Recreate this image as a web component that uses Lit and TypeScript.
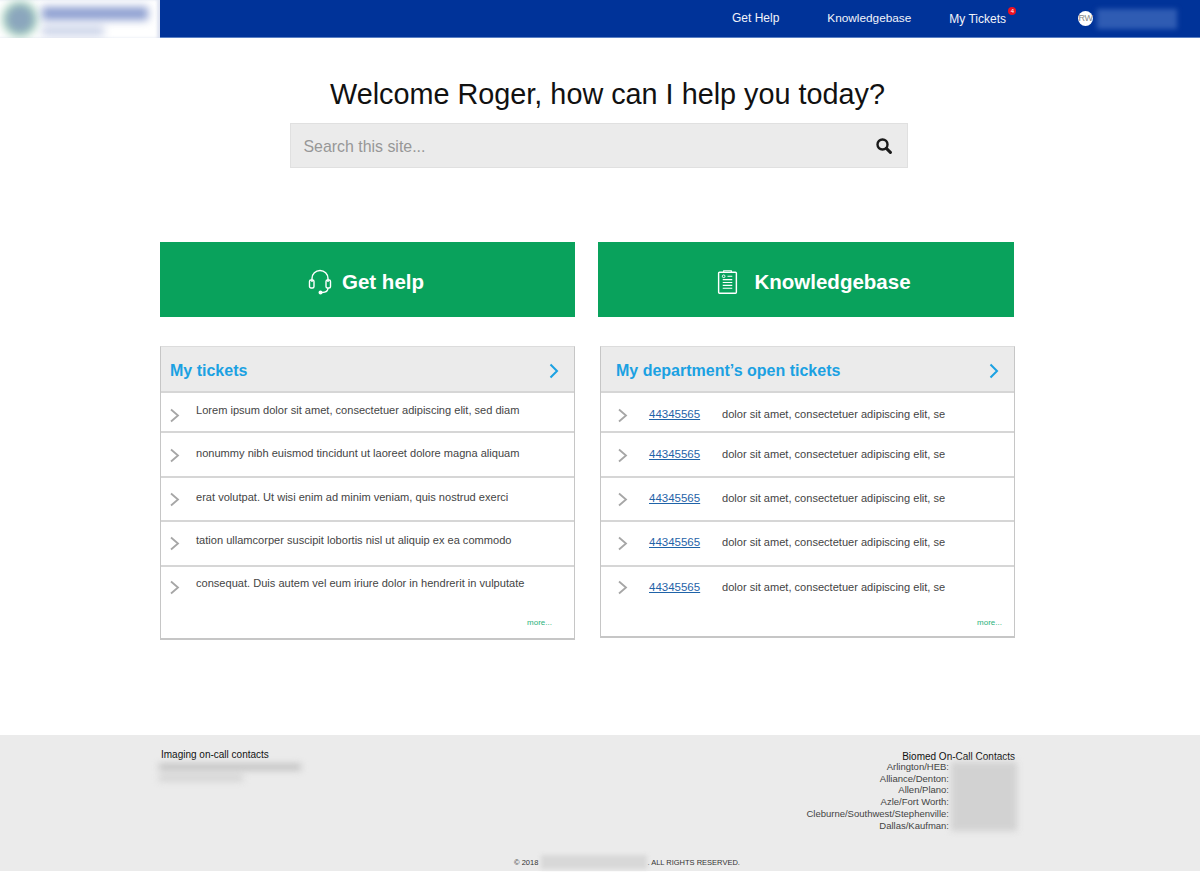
import { LitElement, html, css, svg } from "lit";
import { customElement } from "lit/decorators.js";

const left = [
  { t: "Lorem ipsum dolor sit amet, consectetuer adipiscing elit, sed diam", m: 9 },
  { t: "nonummy nibh euismod tincidunt ut laoreet dolore magna aliquam", m: 12 },
  { t: "erat volutpat. Ut wisi enim ad minim veniam, quis nostrud exerci", m: 11 },
  { t: "tation ullamcorper suscipit lobortis nisl ut aliquip ex ea commodo", m: 10 },
  { t: "consequat. Duis autem vel eum iriure dolor in hendrerit in vulputate", m: 8 },
];
const rowH = [40, 45, 44, 45, 44];
const chevTop = [14.5, 14.5, 13.5, 13.5, 12.5];
const rightM = [13, 13, 12, 12, 12];
const places = ["Arlington/HEB:", "Alliance/Denton:", "Allen/Plano:", "Azle/Fort Worth:", "Cleburne/Southwest/Stephenville:", "Dallas/Kaufman:"];

const chevron = svg`<path d="M1 1.5l7 6-7 6" fill="none" stroke="#a6a6a6" stroke-width="1.8"/>`;
const blueChevron = svg`<path d="M1.5 1.5l6.5 6.5-6.5 6.5" fill="none" stroke="#1ba1e2" stroke-width="2"/>`;

@customElement("app-root")
export class AppRoot extends LitElement {
  static styles = css`
    :host { display: block; width: 1200px; height: 872px; overflow: hidden; background: #fff; font-family: "Liberation Sans", Arial, sans-serif; color: #333; }
    * { box-sizing: border-box; }
    .top { display: flex; height: 38px; }
    .logo { width: 160px; height: 38px; display: flex; gap: 8px; padding: 5px 0 0 6px; overflow: hidden; background: #fff; box-shadow: inset -3px 0 3px #dfe4f1; }
    .logo-mark { width: 28px; height: 28px; border-radius: 50%; background: #8ba6bd; box-shadow: 0 0 0 4px #a9d9bd; filter: blur(4px); flex: none; }
    .logo-text { display: flex; flex-direction: column; gap: 7px; padding-top: 2px; filter: blur(4px); }
    .logo-a { width: 106px; height: 13px; background: #8c9ed0; }
    .logo-b { width: 62px; height: 8px; background: #c2cce5; }
    .bar { flex: 1; background: #003399; border-bottom: 1px solid #5a80c4; color: #f2f4fa; font-size: 12px; display: flex; align-items: center; position: relative; padding-left: 572px; }
    .nav { margin-top: -1px; white-space: nowrap; }
    .nav.help { margin-right: 48px; }
    .nav.know { margin-right: 38px; font-size: 11.8px; }
    .nav.tickets { margin-right: 72px; position: relative; margin-top: 1px; }
    .badge { position: absolute; left: 59px; top: -5px; width: 8px; height: 8px; border-radius: 50%; background: #ee1122; color: #fff; font-size: 6px; line-height: 8px; text-align: center; }
    .avatar { width: 15px; height: 15px; border-radius: 50%; background: #fff; color: #888; font-size: 9px; line-height: 15px; text-align: center; flex: none; letter-spacing: -0.5px; }
    .who { width: 80px; height: 20px; margin-left: 4px; background: #2f5cb3; filter: blur(2.5px); flex: none; }
    .hero { display: flex; flex-direction: column; align-items: center; padding: 37px 1px 0 16px; height: 204px; }
    h1 { margin: 0; font-size: 28.8px; line-height: 38px; font-weight: 400; color: #111; white-space: nowrap; }
    .search { margin: 10px 0 0 -18px; width: 618px; height: 45px; background: #ebebeb; border: 1px solid #e0e0e0; display: flex; align-items: center; justify-content: space-between; padding: 0 15px 0 13px; font-size: 15.9px; color: #979797; }
    .search span { margin-top: 2px; }
    .search svg { display: block; }
    .main { width: 855px; margin-left: 160px; }
    .cta { display: grid; grid-template-columns: 415px 416px; gap: 23px; }
    .btn { height: 75px; background: #09a25c; color: #fff; font-size: 20.5px; font-weight: 700; display: flex; align-items: center; justify-content: center; padding-top: 4px; }
    .btn.help { gap: 10px; padding-right: 3px; }
    .btn.kb { gap: 16px; padding-left: 16px; }
    .panels { display: grid; grid-template-columns: 415px 415px; gap: 25px; margin-top: 29px; align-items: start; }
    .panel { border: 1px solid #c6c6c6; border-top-color: #dcdcdc; border-bottom-width: 2px; display: flex; flex-direction: column; }
    .panel.l { height: 294px; }
    .panel.r { height: 292px; }
    .head { height: 44px; flex: none; background: #ebebeb; color: #1ba1e2; font-size: 16px; font-weight: 700; display: flex; align-items: center; justify-content: space-between; padding: 3px 15px 0 9px; }
    .r .head { padding-left: 15px; }
    .row { flex: none; border-top: 2px solid #d6d6d6; display: flex; font-size: 11.07px; line-height: 16px; color: #444; white-space: nowrap; position: relative; align-items: flex-start; }
    .row svg { position: absolute; left: 9px; }
    .r .row svg { left: 17px; }
    .l .row .t { margin-left: 35px; }
    .r .row .id { margin-left: 48px; width: 73px; color: #1f63a8; text-decoration: underline; font-size: 11.5px; }
    .foot-more { display: flex; justify-content: flex-end; font-size: 8px; color: #2ab27b; padding: 9px 22px 0 0; }
    .r .foot-more { padding-right: 12px; }
    footer { margin-top: 95px; height: 136px; background: #ebebeb; position: relative; font-size: 9.5px; color: #222; display: flex; flex-direction: column; }
    .fcols { display: flex; justify-content: space-between; padding: 14px 185px 0 161px; height: 120px; }
    .fl b, .fr b { font-weight: 400; font-size: 10px; color: #111; display: block; line-height: 12px; }
    .fr b { margin-top: 2px; margin-bottom: -2px; }
    .fl-blur { width: 142px; margin: 3px 0 0 -2px; display: flex; flex-direction: column; gap: 5px; filter: blur(3.5px); }
    .fl-blur i { display: block; height: 6px; background: #bdbdbd; }
    .fl-blur i:last-child { width: 84px; background: #d0d0d0; }
    .fr { text-align: right; position: relative; }
    .fr .places { line-height: 11.7px; margin-right: 66px; color: #444; }
    .fr-blur { position: absolute; left: 100%; margin-left: -64px; top: 13px; width: 66px; height: 69px; background: #d2d2d2; filter: blur(3px); }
    .copy { font-size: 7.5px; color: #333; display: flex; align-items: center; justify-content: center; padding-left: 54px; }
    .copy-blur { width: 106px; height: 14px; margin: 0 0 0 3px; background: #d8d8d8; filter: blur(2px); }
  `;

  render() {
    return html`
      <div class="top">
        <div class="logo"><div class="logo-mark"></div><div class="logo-text"><div class="logo-a"></div><div class="logo-b"></div></div></div>
        <div class="bar">
          <span class="nav help">Get Help</span>
          <span class="nav know">Knowledgebase</span>
          <span class="nav tickets">My Tickets<span class="badge">4</span></span>
          <span class="avatar">RW</span><span class="who"></span>
        </div>
      </div>
      <div class="hero">
        <h1>Welcome Roger, how can I help you today?</h1>
        <div class="search">
          <span>Search this site...</span>
          <svg width="16" height="16" viewBox="0 0 16 16"><circle cx="6.5" cy="6.5" r="5" fill="none" stroke="#1a1a1a" stroke-width="2.4"/><path d="M10.4 10.4l4 4" stroke="#1a1a1a" stroke-width="3" stroke-linecap="round"/></svg>
        </div>
      </div>
      <div class="main">
        <div class="cta">
          <div class="btn help">
            <svg width="24" height="26" viewBox="0 0 24 26" fill="none" stroke="#fff" stroke-width="1.4">
              <path d="M4 13V9.5a8 8 0 0 1 16 0V13"/>
              <rect x="1.5" y="11" width="4.5" height="8" rx="1.5"/>
              <rect x="18" y="11" width="4.5" height="8" rx="1.5"/>
              <path d="M20 19c0 3-2.5 4.5-6 4.5"/>
              <circle cx="12.5" cy="23.5" r="1.3" fill="#fff"/>
            </svg>
            <span>Get help</span>
          </div>
          <div class="btn kb">
            <svg width="21" height="26" viewBox="0 0 22 26" fill="none" stroke="#fff" stroke-width="1.5">
              <rect x="1.7" y="2.7" width="18.6" height="22" rx="1"/>
              <path d="M7 3.2V1.2h8v2M6 10.5h10M6 13.5h10M6 16.5h10M6 19.5h10M11 7h5" stroke-width="1.2"/>
              <circle cx="7" cy="7" r="1.4" stroke-width="1"/>
            </svg>
            <span>Knowledgebase</span>
          </div>
        </div>
        <div class="panels">
          <div class="panel l">
            <div class="head"><span>My tickets</span><svg width="10" height="16" viewBox="0 0 10 16">${blueChevron}</svg></div>
            ${left.map((r, i) => html`<div class="row" style="height:${rowH[i]}px"><svg style="top:${chevTop[i]}px" width="10" height="15" viewBox="0 0 10 15">${chevron}</svg><span class="t" style="margin-top:${r.m}px">${r.t}</span></div>`)}
            <div class="foot-more">more...</div>
          </div>
          <div class="panel r">
            <div class="head"><span>My department’s open tickets</span><svg width="10" height="16" viewBox="0 0 10 16">${blueChevron}</svg></div>
            ${rowH.map((h, i) => html`<div class="row" style="height:${h}px"><svg style="top:${chevTop[i]}px" width="10" height="15" viewBox="0 0 10 15">${chevron}</svg><span class="id" style="margin-top:${rightM[i]}px">44345565</span><span style="margin-top:${rightM[i]}px">dolor sit amet, consectetuer adipiscing elit, se</span></div>`)}
            <div class="foot-more">more...</div>
          </div>
        </div>
      </div>
      <footer>
        <div class="fcols">
          <div class="fl"><b>Imaging on-call contacts</b><div class="fl-blur"><i></i><i></i></div></div>
          <div class="fr"><b>Biomed On-Call Contacts</b>
            <div class="places">${places.map((p) => html`<div>${p}</div>`)}</div>
            <div class="fr-blur"></div>
          </div>
        </div>
        <div class="copy"><span>© 2018</span><span class="copy-blur"></span><span>. ALL RIGHTS RESERVED.</span></div>
      </footer>
    `;
  }
}
